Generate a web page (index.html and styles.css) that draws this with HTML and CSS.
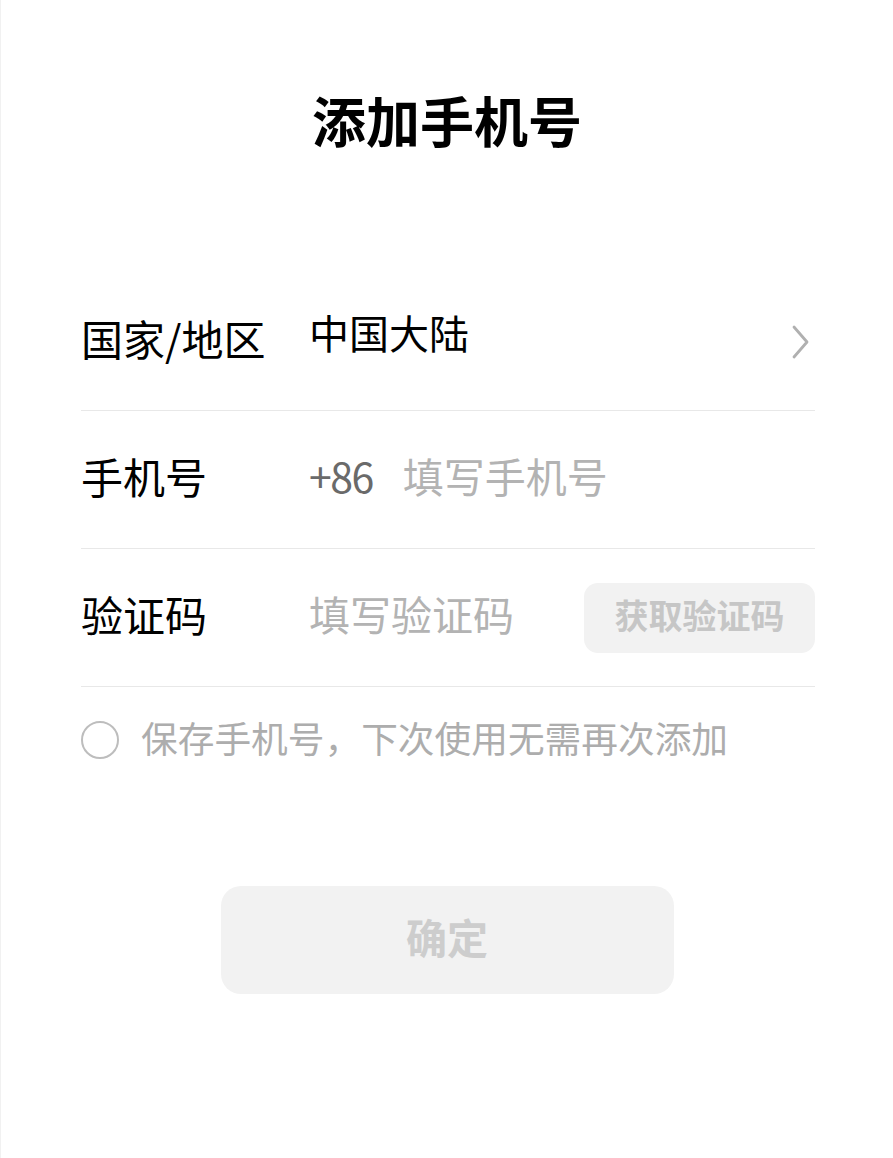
FILE: index.html
```html
<!DOCTYPE html>
<html lang="zh-CN">
<head>
<meta charset="utf-8">
<title>添加手机号</title>
<link rel="stylesheet" href="styles.css">
</head>
<body>
<div class="page">
  <h1 class="title">添加手机号</h1>
  <div class="form">
    <div class="row">
      <div class="label">国家/地区</div>
      <div class="value country">中国大陆</div>
      <svg class="chevron" width="20" height="34" viewBox="0 0 20 34" aria-hidden="true">
        <path d="M3 2 L16 17 L3 32" fill="none" stroke="#b0b0b0" stroke-width="2.8" stroke-linecap="round" stroke-linejoin="round"/>
      </svg>
    </div>
    <div class="row">
      <div class="label">手机号</div>
      <div class="value"><span class="prefix">+86</span><span class="placeholder">填写手机号</span></div>
    </div>
    <div class="row">
      <div class="label">验证码</div>
      <div class="value"><span class="placeholder">填写验证码</span></div>
      <div class="code-btn">获取验证码</div>
    </div>
  </div>
  <div class="agree">
    <span class="radio"></span>
    <span class="agree-text">保存手机号，下次使用无需再次添加</span>
  </div>
  <div class="actions">
    <div class="confirm">确定</div>
  </div>
</div>
</body>
</html>
```
FILE: styles.css
```css
html, body {
  margin: 0;
  padding: 0;
  background: #ffffff;
}
body {
  font-family: "Noto Sans CJK SC", "Noto Sans", "Liberation Sans", sans-serif;
  color: #000;
}
.page {
  width: 893px;
  height: 1158px;
  box-sizing: border-box;
  padding-top: 82px;
  border-left: 1px solid #f1f1f1;
  overflow: hidden;
}
.title {
  margin: 0;
  height: 76px;
  line-height: 76px;
  font-size: 54px;
  font-weight: 700;
  text-align: center;
}
.form {
  margin: 115px 78px 0 80px;
}
.row {
  height: 137px;
  border-bottom: 1px solid #e8e8e8;
  display: flex;
  align-items: center;
}
.label {
  width: 228px;
  flex: none;
  font-size: 42px;
  line-height: 1;
  padding-bottom: 8px;
  color: #000;
}
.value {
  flex: 1;
  font-size: 41px;
  line-height: 1;
  padding-bottom: 8px;
  display: flex;
  align-items: center;
}
.country {
  font-size: 40px;
  padding-bottom: 20px;
}
.prefix {
  color: #6a6a6a;
  margin-right: 30px;
  letter-spacing: -1.5px;
}
.placeholder {
  color: #b3b3b3;
}
.chevron {
  flex: none;
  margin-right: 4px;
}
.code-btn {
  flex: none;
  width: 231px;
  height: 70px;
  box-sizing: border-box;
  padding-bottom: 6px;
  border-radius: 14px;
  background: #f2f2f2;
  color: #c6c6c6;
  font-size: 34px;
  font-weight: 700;
  display: flex;
  align-items: center;
  justify-content: center;
}
.agree {
  margin: 33px 0 0 80px;
  height: 40px;
  display: flex;
  align-items: center;
}
.radio {
  width: 34px;
  height: 34px;
  border: 2px solid #bdbdbd;
  border-radius: 50%;
  flex: none;
  margin-right: 22px;
}
.agree-text {
  font-size: 36.7px;
  color: #adadad;
  line-height: 1;
  padding-bottom: 6px;
}
.actions {
  margin-top: 126px;
  display: flex;
  justify-content: center;
}
.confirm {
  width: 453px;
  height: 108px;
  box-sizing: border-box;
  padding-bottom: 8px;
  border-radius: 20px;
  background: #f2f2f2;
  color: #cdcdcd;
  font-size: 41px;
  font-weight: 700;
  display: flex;
  align-items: center;
  justify-content: center;
}
```
